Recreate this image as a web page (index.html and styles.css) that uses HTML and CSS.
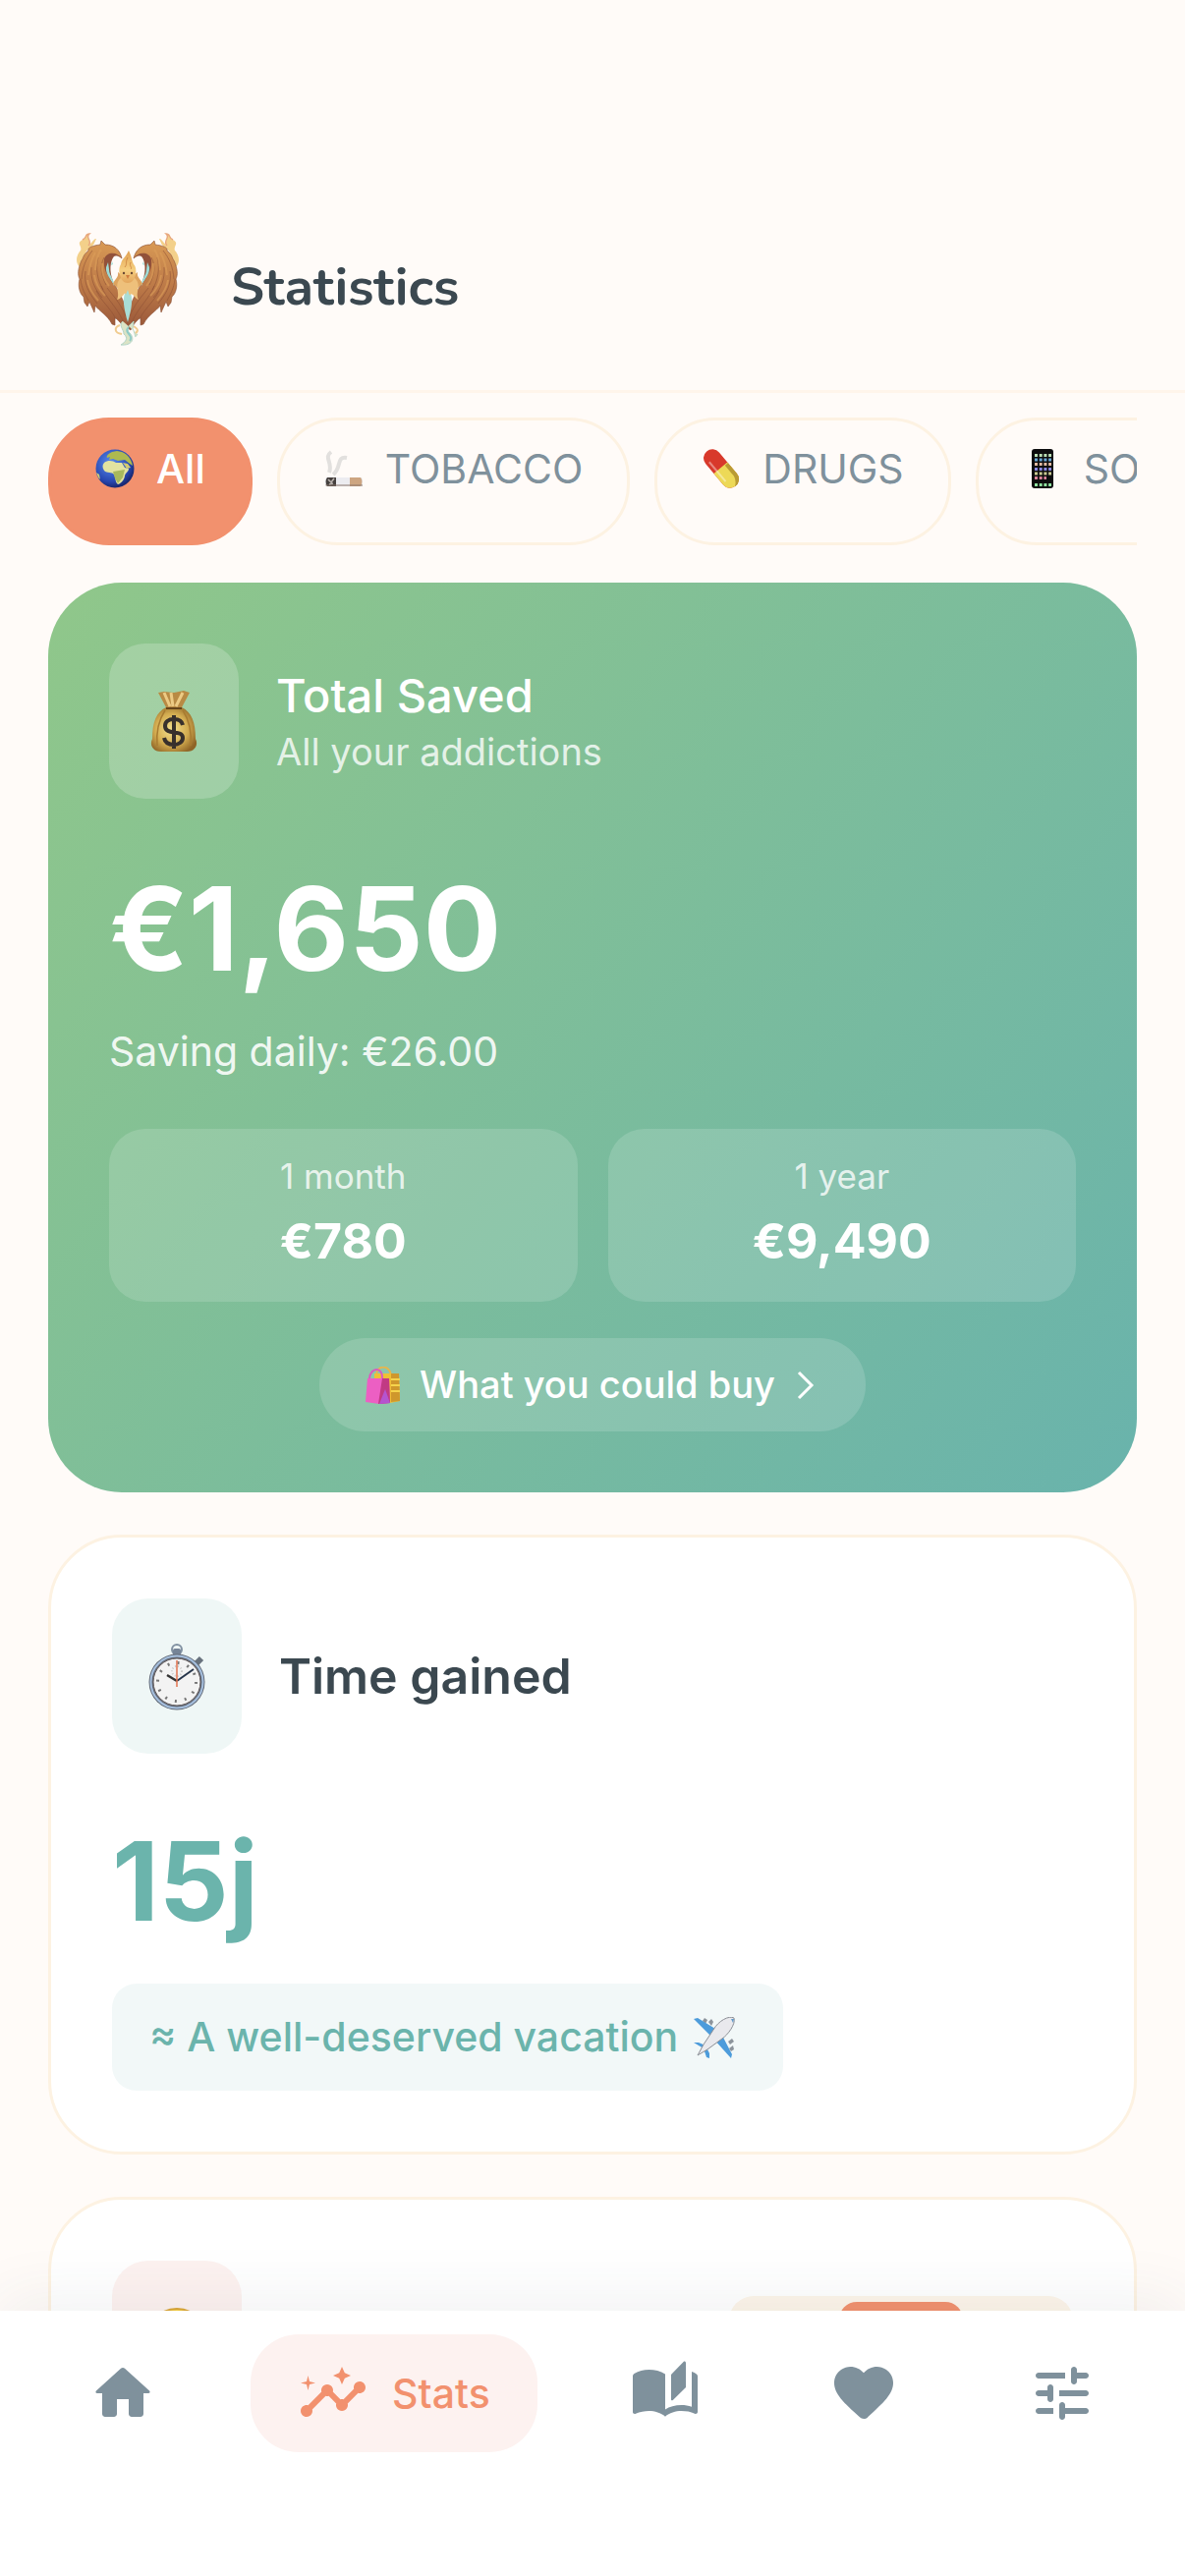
FILE: index.html
```html
<!DOCTYPE html>
<html lang="en">
<head>
    <meta charset="UTF-8">
    <meta name="viewport" content="width=device-width, initial-scale=1.0">
    <title>Statistics</title>
    <link rel="stylesheet" href="styles.css">
</head>
<body>
    <div class="app">
        <header class="header">
            <!-- Phoenix logo -->
            <svg class="logo" viewBox="0 -3 120 130" aria-hidden="true">
                <defs>
                    <linearGradient id="wing" x1="0" y1="0" x2="0" y2="1">
                        <stop offset="0" stop-color="#d99a55"/>
                        <stop offset="0.5" stop-color="#bd7a48"/>
                        <stop offset="1" stop-color="#985639"/>
                    </linearGradient>
                    <linearGradient id="flame" x1="0" y1="0" x2="0" y2="1">
                        <stop offset="0" stop-color="#e0a050"/>
                        <stop offset="0.6" stop-color="#f6cf80"/>
                        <stop offset="1" stop-color="#e3a55c"/>
                    </linearGradient>
                    <g id="wingHalf">
                        <path d="M14 44C4 38 9 28 12 25C14 20 7 18 14 14C19 12 16 8 21 8C16 12 24 14 20 20C26 15 25 13 28 13C26 17 26 19 22 22C13 28 17 36 16 44Z" fill="#f3d08a"/>
                        <path d="M14 14C19 12 16 8 21 8C16 12 25 15 20 20" fill="none" stroke="#e8a77d" stroke-width="1.4"/>
                        <path d="M54 33C52 24 46 19 37 19L33 15L32 19C24 20 19 22 20 25C14 30 15 33 13 35C9 44 9 50 11 54C9 61 11 69 15 72L16 78L19 82L21 77L26 88L27 81C31 87 39 90 44 100L47 101L47 93C50 96 55 100 57 106L60 104L60 92C58 78 50 66 48 62C42 56 37 46 38 37C40 29 48 27 54 33Z" fill="url(#wing)" stroke="#8a4f35" stroke-width="0.6"/>
                        <path d="M24 25C17 34 14 42 13 54M36 32C31 41 33 50 38 60M30 32C27 43 29 55 35 65M23 42C22 54 26 64 34 73M17 46C15 58 20 68 29 79M12 54C13 64 17 70 20 76M33 61C38 74 48 81 56 98M39 63C45 71 53 79 58 92M28 66C34 78 43 84 48 95" fill="none" stroke="#8c4f34" stroke-width="0.8" opacity="0.7"/>
                        <path d="M33 24C28 30 28 38 27 45M27 27C22 35 21 42 20 50M34 38C33 47 35 54 41 61M26 50C27 58 31 65 37 71M19 55C20 63 24 69 30 76" fill="none" stroke="#dc9f5a" stroke-width="2" opacity="0.6"/>
                        <path d="M54 33C50 27 39 25 36 34C35 43 38 50 45 56C41 46 42 36 46 31C49 29 52 31 54 33Z" fill="#92513a"/>
                        <path d="M38 42C37 50 44 54 46 61C47 55 41 51 41 44L40 37ZM44 36L43 40L45 39Z" fill="#9edbd5"/>
                        <path d="M45 59C47 53 51 53 50 47C56 51 53 57 57 62L52 65Z" fill="#dda35f"/>
                    </g>
                </defs>
                <use href="#wingHalf"/>
                <use href="#wingHalf" transform="translate(120 0) scale(-1 1)"/>
                <path d="M60 62C54 72 55 80 60 98C65 80 66 72 60 62Z" fill="#a9ddd6"/>
                <path d="M53 53C45 60 53 68 49 75C56 73 57 65 58 70L60 65L62 71C64 66 67 74 71 75C67 68 75 60 67 53Z" fill="#eec07b"/>
                <path d="M61 25C58 32 54 33 53 39C51 42 51 47 52 49C53 55 56 58 60 58C64 58 67 55 68 49C69 45 68 41 66 39C64 35 64 31 61 25Z" fill="url(#flame)"/>
                <path d="M60 32C57 38 60 38 57 42M63 37C61 41 65 42 63 44" fill="none" stroke="#d08a46" stroke-width="1"/>
                <circle cx="56" cy="48" r="1.2" fill="#6b4a35"/>
                <circle cx="64" cy="48" r="1.2" fill="#6b4a35"/>
                <path d="M58 50L62 50L60 54Z" fill="#d07c3d"/>
                <path d="M55 97C50 101 56 105 56 110C61 114 58 118 53 121C64 122 68 115 62 109C57 104 62 101 66 97L65 105C69 111 66 116 70 110" fill="#dbe3c5" stroke="#b3d5c8" stroke-width="1"/>
                <path d="M52 101C46 103 46 109 54 110M66 102C69 104 72 106 68 109" fill="none" stroke="#f0cc90" stroke-width="2"/>
                <path d="M61 103C55 109 67 111 62 117" fill="none" stroke="#8ecbc6" stroke-width="2"/>
            </svg>
            <h1 class="page-title">Statistics</h1>
        </header>

        <main class="content">
            <div class="chips">
                <button class="chip chip-active">
                    <svg class="chip-icon" viewBox="0 0 40 40" aria-hidden="true">
                        <defs>
                            <radialGradient id="sea" cx="0.4" cy="0.35" r="0.65">
                                <stop offset="0" stop-color="#5b8df0"/>
                                <stop offset="0.75" stop-color="#2747b0"/>
                                <stop offset="1" stop-color="#1a2870"/>
                            </radialGradient>
                        </defs>
                        <circle cx="20" cy="20" r="19.5" fill="url(#sea)"/>
                        <path d="M17 3C13 5 11 7 12 9L15 8L14 11L18 10L23 12L30 11L35 15L38 17C37 11 33 5 27 3L22 2Z" fill="#aeb94f"/>
                        <path d="M9 14C13 11 18 12 21 14L27 14L30 19L34 20C34 23 31 24 30 27C30 30 27 35 23 36C20 34 21 29 19 26C17 23 12 25 9 22C7 19 7 16 9 14Z" fill="#e3e3a0"/>
                        <path d="M18 23L30 21L28 29L23 35L20 30Z" fill="#a8b95c"/>
                        <path d="M28 14L33 15L36 19L32 20ZM1 24L4 26L5 31L3 29Z" fill="#d3cb72"/>
                    </svg>
                    <span>All</span>
                </button>
                <button class="chip">
                    <svg class="chip-icon" viewBox="0 0 40 40" aria-hidden="true">
                        <path d="M7 3C-1 9 9 13 5 24M23 9C12 7 18 19 9 26" fill="none" stroke="#e2e0de" stroke-width="4"/>
                        <rect x="1" y="29" width="38" height="9" rx="2" fill="#ececf0"/>
                        <path d="M3 29H12V38H3Q0 33 3 29Z" fill="#45403e"/>
                        <path d="M4 31L7 34L10 30M5 36L9 35" stroke="#b7b0ac" stroke-width="1.6" fill="none"/>
                        <path d="M26 29H37Q40 33 37 38H26Z" fill="#cda581"/>
                        <path d="M1 36H39V38H2Z" fill="#8a766b" opacity="0.5"/>
                    </svg>
                    <span>TOBACCO</span>
                </button>
                <button class="chip">
                    <svg class="chip-icon" viewBox="0 0 40 40" aria-hidden="true">
                        <g transform="rotate(-40 20 20)">
                            <rect x="11" y="-3" width="18" height="46" rx="9" fill="#d8392b"/>
                            <path d="M11 19H29V34A9 9 0 0 1 11 34Z" fill="#edd957"/>
                            <path d="M25 20H29V34A9 9 0 0 1 19 43Q26 38 25 30Z" fill="#b99b33"/>
                            <path d="M15 7V33" stroke="#fff" stroke-width="2" opacity="0.4"/>
                        </g>
                    </svg>
                    <span>DRUGS</span>
                </button>
                <button class="chip">
                    <svg class="chip-icon" viewBox="0 0 40 40" aria-hidden="true">
                        <rect x="9" y="0" width="22" height="40" rx="3" fill="#0c0c0e"/>
                        <g stroke-width="3" stroke-dasharray="3 1.7" fill="none">
                            <path d="M12 6.500H29" stroke="#b9dfb4"/>
                            <path d="M12 11H29" stroke="#6aa9d8"/>
                            <path d="M12 15.500H29" stroke="#e2b9a1"/>
                            <path d="M12 20.500H29" stroke="#8d8be8"/>
                            <path d="M12 25H29" stroke="#c9c991"/>
                            <path d="M12 29.500H24" stroke="#d9849a"/>
                            <path d="M12 36.500H29" stroke="#8fe3a0"/>
                        </g>
                    </svg>
                    <span>SOCIAL</span>
                </button>
            </div>

            <section class="card card-saved">
                <div class="card-header">
                    <div class="tile">
                        <svg class="tile-icon" viewBox="0 0 74 74" aria-hidden="true">
                            <defs>
                                <radialGradient id="bag" cx="0.45" cy="0.5" r="0.6">
                                    <stop offset="0" stop-color="#f3df8c"/>
                                    <stop offset="0.6" stop-color="#d3ac50"/>
                                    <stop offset="1" stop-color="#8f6426"/>
                                </radialGradient>
                            </defs>
                            <path d="M21 8L27 7L37 8L47 6L53 8L45 23H29Z" fill="#b88a44"/>
                            <path d="M27 8L33 22M34 8L36 22M46 8L39 22" stroke="#ecca84" stroke-width="3"/>
                            <path d="M29 23H45C55 28 59 38 59 55C62 61 59 68 50 68H24C15 68 12 61 15 55C15 38 19 28 29 23Z" fill="url(#bag)"/>
                            <path d="M28 26C20 38 19 50 20 62M46 26C54 38 55 50 54 62" stroke="#a87b31" stroke-width="1.5" fill="none"/>
                            <path d="M29 24H45" stroke="#664419" stroke-width="2"/>
                            <path d="M46 41C45 36 41 35 37 35C31 35 28 38 28 42C28 52 46 45 46 54C46 58 42 61 37 61C32 61 28 59 27 54M37 31V65" stroke="#38302c" stroke-width="4" fill="none"/>
                        </svg>
                    </div>
                    <div>
                        <h2 class="saved-title">Total Saved</h2>
                        <p class="saved-subtitle">All your addictions</p>
                    </div>
                </div>
                <div class="saved-amount">€1,650</div>
                <p class="saved-daily">Saving daily: €26.00</p>
                <div class="projections">
                    <div class="projection">
                        <div class="projection-label">1 month</div>
                        <div class="projection-value">€780</div>
                    </div>
                    <div class="projection">
                        <div class="projection-label">1 year</div>
                        <div class="projection-value">€9,490</div>
                    </div>
                </div>
                <button class="buy-button">
                    <svg class="buy-icon" viewBox="0 0 38 38" aria-hidden="true">
                        <path d="M12 9C12 -1 24 -3 27 8" fill="none" stroke="#e9b54b" stroke-width="2"/>
                        <path d="M10 7H35L36 35L26 37L10 34Z" fill="#efc034"/>
                        <path d="M27 7H35L36 35L27 36Z" fill="#cf972c"/>
                        <path d="M27 13H36M27 19H36M27 25H36" stroke="#f5d34c" stroke-width="2"/>
                        <path d="M5 12C6 0 19 0 18 12" fill="none" stroke="#d95bc0" stroke-width="2"/>
                        <path d="M3 12H25L26 37L15 38L1 36Z" fill="#ec5fc3"/>
                        <path d="M18 12H25L26 37L14 38Z" fill="#c13a83"/>
                        <path d="M21 23L26 37L15 38Z" fill="#b554cf"/>
                    </svg>
                    <span>What you could buy</span>
                    <svg class="chevron" viewBox="0 0 18 30" aria-hidden="true">
                        <path d="M2 2L15 15L2 28" fill="none" stroke="currentColor" stroke-width="3"/>
                    </svg>
                </button>
            </section>

            <section class="card">
                <div class="card-header">
                    <div class="tile tile-teal">
                        <svg class="tile-icon" viewBox="0 0 74 74" aria-hidden="true">
                            <circle cx="37" cy="10" r="5" fill="none" stroke="#8292a3" stroke-width="2"/>
                            <rect x="33" y="9" width="8" height="8" rx="2" fill="#758497"/>
                            <path d="M57 24L62 19" stroke="#68727d" stroke-width="6"/>
                            <circle cx="37" cy="43" r="28.500" fill="#646c79"/>
                            <circle cx="37" cy="43" r="26.500" fill="none" stroke="#a6c0df" stroke-width="2"/>
                            <circle cx="37" cy="43" r="24" fill="#f3f3f3" stroke="#61595a" stroke-width="1"/>
                            <circle cx="37" cy="43" r="19.500" fill="none" stroke="#777" stroke-width="3" stroke-dasharray="2 8.21"/>
                            <circle cx="37" cy="32" r="5" fill="none" stroke="#c9c9c9" stroke-width="2" stroke-dasharray="1 2"/>
                            <path d="M37 42L27 36" stroke="#333" stroke-width="2.500"/>
                            <path d="M37 42L54 30" stroke="#26344a" stroke-width="2"/>
                            <path d="M37 48V21" stroke="#e3734f" stroke-width="1.500"/>
                        </svg>
                    </div>
                    <h2 class="card-title">Time gained</h2>
                </div>
                <div class="time-amount">15j</div>
                <div class="time-note">
                    <span>≈ A well-deserved vacation</span>
                    <svg class="plane" viewBox="0 0 42 42" aria-hidden="true">
                        <path d="M9 4L11 1L14 3L12 7ZM15 5L18 2L20 5L18 9ZM35 25L39 22L41 25L37 28ZM36 32L40 29L41 33L38 35Z" fill="#8d949c"/>
                        <path d="M0 2L4 1L27 15L39 38L38 42L20 22Z" fill="#4d9cdb"/>
                        <path d="M0 26L5 26L12 29L16 37L16 42L13 41L10 32Z" fill="#4d9cdb"/>
                        <path d="M41 1C43 7 35 18 29 22L14 33L4 39L10 28L20 13C25 4 36 -2 41 1Z" fill="#e9e9ed" stroke="#8c8f96" stroke-width="1"/>
                        <path d="M38 2L41 2L40 6Z" fill="#6099c7"/>
                    </svg>
                </div>
            </section>

            <section class="card">
                <div class="card-header">
                    <div class="tile tile-coral">
                        <svg class="tile-icon" viewBox="0 0 74 74" aria-hidden="true">
                            <circle cx="37" cy="37" r="30" fill="#f7cf45" stroke="#dba73a" stroke-width="2"/>
                        </svg>
                    </div>
                    <div class="segmented">
                        <span class="segment"></span>
                        <span class="segment segment-active"></span>
                        <span class="segment"></span>
                    </div>
                </div>
            </section>
        </main>

        <nav class="bottom-nav">
            <a class="nav-item" href="#home" aria-label="Home">
                <svg class="nav-icon" viewBox="0 0 24 24"><path d="M10 19v-5h4v5c0 .55.45 1 1 1h3c.55 0 1-.45 1-1v-7h1.700c.46 0 .68-.57.33-.87L12.670 3.600c-.38-.34-.96-.34-1.340 0l-8.360 7.530c-.34.3-.13.87.33.87H5v7c0 .55.45 1 1 1h3c.55 0 1-.45 1-1z"/></svg>
            </a>
            <a class="nav-item nav-active" href="#stats">
                <svg class="nav-icon" viewBox="0 0 24 24" aria-hidden="true">
                    <path d="M21 8c-1.450 0-2.260 1.440-1.930 2.510l-3.550 3.560c-.3-.09-.74-.09-1.040 0l-2.550-2.550C12.270 10.450 11.460 9 10 9c-1.450 0-2.270 1.440-1.930 2.520l-4.560 4.550C2.440 15.740 1 16.550 1 18c0 1.100.9 2 2 2 1.450 0 2.260-1.440 1.930-2.510l4.550-4.560c.3.09.74.09 1.040 0l2.550 2.550C12.730 16.550 13.540 18 15 18c1.450 0 2.270-1.440 1.930-2.520l3.560-3.550c1.070.33 2.510-.48 2.510-1.930 0-1.100-.9-2-2-2z"/>
                    <path d="M15 9l.94-2.070L18 6l-2.060-.93L15 3l-.92 2.070L12 6l2.080.93z"/>
                    <path d="M3.500 11L4 9l2-.5L4 8l-.5-2L3 8l-2 .5L3 9z"/>
                </svg>
                <span>Stats</span>
            </a>
            <a class="nav-item" href="#journal" aria-label="Journal">
                <svg class="nav-icon" viewBox="0 0 24 24">
                    <path d="M1.500 5.300C3 4.400 4.600 4 6.500 4C8.400 4 10.500 4.400 12 5.500V17.500C13.400 16.500 15.400 16 17.500 16C18.700 16 19.900 16.200 21 16.600V4.700C21.600 4.900 22.200 5.200 22.600 5.500C22.900 5.700 23 6 23 6.300V18.300C23 18.800 22.500 19.100 22 18.900C20.600 18.200 19.100 18 17.500 18C15.600 18 13.400 18.600 12 19.900C10.600 18.600 8.400 18 6.500 18C5 18 3.400 18.300 2 18.900C1.500 19.100 1 18.800 1 18.400V6.200C1 5.800 1.200 5.500 1.500 5.300Z"/>
                    <path d="M14 5.700L18.200 1.300C18.500 1 19 1.200 19 1.700V10L14.600 14.300C14.300 14.600 14 14.400 14 14.100Z"/>
                </svg>
            </a>
            <a class="nav-item" href="#favorites" aria-label="Favorites">
                <svg class="nav-icon" viewBox="0 0 24 24"><path d="M13.350 20.130c-.76.69-1.930.69-2.690-.01l-.11-.1C5.300 15.270 1.870 12.160 2 8.280c.06-1.700.93-3.330 2.340-4.290 2.640-1.800 5.900-.96 7.660 1.100 1.760-2.060 5.020-2.910 7.660-1.100 1.410.96 2.280 2.590 2.340 4.290.14 3.880-3.300 6.990-8.550 11.760l-.1.09z"/></svg>
            </a>
            <a class="nav-item" href="#settings" aria-label="Settings">
                <svg class="nav-icon" viewBox="0 0 24 24"><path d="M3 18c0 .55.45 1 1 1h5v-2H4c-.55 0-1 .45-1 1zM3 6c0 .55.45 1 1 1h9V5H4c-.55 0-1 .45-1 1zm10 14v-1h7c.55 0 1-.45 1-1s-.45-1-1-1h-7v-1c0-.55-.45-1-1-1s-1 .45-1 1v4c0 .55.45 1 1 1s1-.45 1-1zM7 10v1H4c-.55 0-1 .45-1 1s.45 1 1 1h3v1c0 .55.45 1 1 1s1-.45 1-1v-4c0-.55-.45-1-1-1s-1 .45-1 1zm14 2c0-.55-.45-1-1-1h-9v2h9c.55 0 1-.45 1-1zm-5-3c.55 0 1-.45 1-1V7h3c.55 0 1-.45 1-1s-.45-1-1-1h-3V4c0-.55-.45-1-1-1s-1 .45-1 1v4c0 .55.45 1 1 1z"/></svg>
            </a>
        </nav>
    </div>
</body>
</html>
```
FILE: styles.css
```css
* {
    margin: 0;
    padding: 0;
    box-sizing: border-box;
}

body {
    font-family: Inter, 'Liberation Sans', sans-serif;
    background: #fffbf8;
    color: #3b4850;
}

button {
    border: none;
    font: inherit;
    cursor: pointer;
}

.app {
    height: 100vh;
    display: flex;
    flex-direction: column;
    overflow: hidden;
}

/* Header */
.header {
    display: flex;
    align-items: center;
    gap: 45px;
    padding: 227px 70px 40px;
    border-bottom: 3px solid #fff5eb;
}

.logo {
    width: 120px;
    height: 130px;
}

.page-title {
    font-family: Nunito, Lato, sans-serif;
    font-size: 54px;
    line-height: 74px;
    font-weight: 700;
}

/* Scrolling content */
.content {
    flex: 1;
    min-height: 0;
    overflow: hidden;
    padding: 25px 49px 0;
}

.chips {
    display: flex;
    gap: 25px;
    overflow: hidden;
    margin-bottom: 38px;
}

.chip {
    flex: none;
    display: flex;
    align-items: center;
    gap: 22px;
    padding: 19px 45px 45px;
    border: 3px solid #fdf2e2;
    border-radius: 62px;
    background: transparent;
    color: #7f919c;
    font-size: 41px;
    line-height: 60px;
}

.chip-active {
    background: #f2916e;
    border-color: #f2916e;
    color: #fff;
    font-weight: 500;
}

.chip-icon {
    width: 40px;
    height: 40px;
}

/* Cards */
.card {
    margin-bottom: 43px;
    padding: 62px;
    background: #fff;
    border: 3px solid #fdf2e2;
    border-radius: 75px;
}

.card-saved {
    border: none;
    background: linear-gradient(130deg, #90c78a, #69b3ac);
    color: #fff;
}

.card-header {
    display: flex;
    align-items: center;
    gap: 38px;
    margin-bottom: 62px;
}

.tile {
    flex: none;
    width: 132px;
    height: 158px;
    display: flex;
    align-items: center;
    justify-content: center;
    background: rgba(255, 255, 255, 0.2);
    border-radius: 37px;
}

.tile-teal {
    background: #eff7f6;
}

.tile-coral {
    background: #fdf2f0;
}

.tile-icon {
    width: 74px;
    height: 74px;
}

.card-title {
    font-size: 50px;
    line-height: 62px;
    font-weight: 600;
}

.saved-title {
    font-size: 47px;
    line-height: 62px;
    font-weight: 500;
}

.saved-subtitle {
    font-size: 38px;
    line-height: 52px;
    color: rgba(255, 255, 255, 0.8);
}

.saved-amount {
    font-size: 118px;
    line-height: 140px;
    font-weight: 700;
}

.saved-daily {
    margin: 25px 0 49px;
    font-size: 41px;
    line-height: 60px;
    color: rgba(255, 255, 255, 0.9);
}

.projections {
    display: flex;
    gap: 31px;
    margin-bottom: 37px;
}

.projection {
    flex: 1;
    padding: 25px;
    text-align: center;
    background: rgba(255, 255, 255, 0.15);
    border-radius: 37px;
}

.projection-label {
    margin-bottom: 6px;
    font-size: 35px;
    line-height: 46px;
    color: rgba(255, 255, 255, 0.8);
}

.projection-value {
    font-size: 50px;
    line-height: 74px;
    font-weight: 700;
}

.buy-button {
    display: flex;
    align-items: center;
    gap: 18px;
    margin: 0 auto;
    padding: 0 52px 0 46px;
    background: rgba(255, 255, 255, 0.15);
    border-radius: 47px;
    color: #fff;
    font-size: 38px;
    line-height: 95px;
    font-weight: 500;
}

.buy-icon {
    width: 38px;
    height: 38px;
}

.chevron {
    width: 18px;
    height: 30px;
    margin-left: 4px;
}

.time-amount {
    font-size: 111px;
    line-height: 136px;
    font-weight: 700;
    color: #6bb4ac;
}

.time-note {
    display: flex;
    align-items: center;
    gap: 16px;
    width: fit-content;
    margin-top: 36px;
    padding: 24px 49px 24px 38px;
    background: #f2f8f8;
    border-radius: 25px;
    color: #6bb4ac;
    font-size: 41px;
    line-height: 61px;
    font-weight: 500;
}

.plane {
    width: 42px;
    height: 42px;
}

.segmented {
    display: flex;
    width: 350px;
    height: 86px;
    margin-left: auto;
    padding: 6px;
    background: #fdf5ea;
    border-radius: 25px;
}

.segment {
    flex: 1;
}

.segment-active {
    flex: none;
    width: 126px;
    background: #f2916e;
    border-radius: 18px;
}

/* Bottom navigation */
.bottom-nav {
    position: relative;
    display: flex;
    justify-content: space-around;
    align-items: flex-start;
    height: 270px;
    padding: 24px 24px 0;
    background: #fff;
    box-shadow: 0 -12px 60px rgba(59, 72, 80, 0.07);
}

.nav-item {
    display: flex;
    align-items: center;
    gap: 24px;
    height: 120px;
    padding: 0 36px;
    border-radius: 49px;
    color: #7f919c;
    font-size: 41px;
    text-decoration: none;
}

.nav-active {
    padding: 0 48px;
    background: #fdf2f0;
    color: #f2916e;
    font-weight: 500;
}

.nav-icon {
    width: 72px;
    height: 72px;
    fill: currentColor;
}
```
